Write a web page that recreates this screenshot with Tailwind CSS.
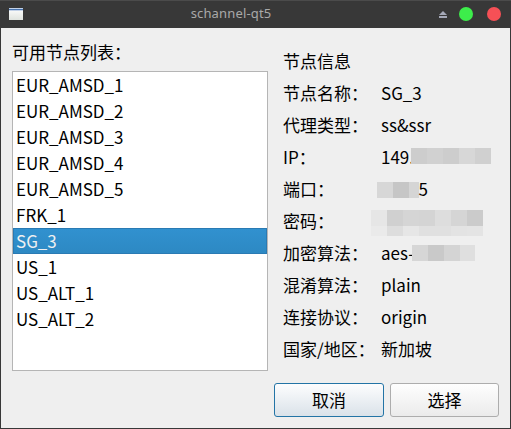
<!DOCTYPE html>
<html lang="zh-CN">
<head>
<meta charset="utf-8">
<title>schannel-qt5</title>
<script src="https://cdn.jsdelivr.net/npm/@tailwindcss/browser@4"></script>
</head>
<body class="w-[511px] h-[429px] overflow-hidden bg-[#383838]">
<div class="w-[511px] h-[429px] flex flex-col border-b border-[#383838] text-black text-[17px] leading-[26px] font-['Noto_Sans_CJK_SC',sans-serif]">
  <header class="h-7 shrink-0 flex items-center border-t border-[#4b4b4b] bg-[#383838] pl-[9px] pr-[10px] pb-px">
    <svg class="w-[14px] h-3" viewBox="0 0 14 12" shape-rendering="crispEdges">
      <defs><linearGradient id="w" x1="0" y1="0" x2="0" y2="1"><stop offset="0" stop-color="#fff"/><stop offset="1" stop-color="#dfe3de"/></linearGradient></defs>
      <rect width="14" height="12" fill="url(#w)"/><rect width="14" height="3" fill="#c3d2e8"/><rect y="1" width="14" height="1" fill="#4672ae"/>
    </svg>
    <h1 class="flex-1 -mt-[2px] text-center text-[13px] leading-5 tracking-[0.15px] text-[#a9a9a9] font-['Noto_Sans',sans-serif]">schannel-qt5</h1>
    <svg class="w-2 h-[7px] mr-3 mt-px" viewBox="0 0 8 7"><path d="M4 0L8 4H0Z M0 5H8V7H0Z" fill="#a5a9b8"/></svg>
    <span class="size-[14px] rounded-full bg-[#3ded4b] mr-[14px]"></span>
    <span class="size-[14px] rounded-full bg-[#f65056]"></span>
  </header>
  <main class="flex-1 mx-px bg-[#efefef] flex flex-col">
    <div class="flex h-[343px]">
      <section class="ml-[11px] w-[256px] shrink-0 pt-[11px]">
        <h2 class="h-8">可用节点列表：</h2>
        <ul class="h-[300px] border border-[#b5b5b5] bg-white">
          <li class="h-[26px] pl-[3px]">EUR_AMSD_1</li>
          <li class="h-[26px] pl-[3px]">EUR_AMSD_2</li>
          <li class="h-[26px] pl-[3px]">EUR_AMSD_3</li>
          <li class="h-[26px] pl-[3px]">EUR_AMSD_4</li>
          <li class="h-[26px] pl-[3px]">EUR_AMSD_5</li>
          <li class="h-[26px] pl-[3px]">FRK_1</li>
          <li class="h-[26px] pl-[2px] leading-6 border border-[#2a7ab3] bg-linear-to-b from-[#3191cf] to-[#2d89c3] text-[#eff0f1]">SG_3</li>
          <li class="h-[26px] pl-[3px]">US_1</li>
          <li class="h-[26px] pl-[3px]">US_ALT_1</li>
          <li class="h-[26px] pl-[3px]">US_ALT_2</li>
        </ul>
      </section>
      <section class="ml-[15px] shrink-0 pt-[17px] leading-8">
        <h2 class="h-8">节点信息</h2>
        <dl class="grid grid-cols-[98px_125px] auto-rows-[32px] whitespace-nowrap">
          <dt>节点名称：</dt><dd>SG_3</dd>
          <dt>代理类型：</dt><dd>ss&amp;ssr</dd>
          <dt>IP：</dt>
          <dd class="flex"><span class="w-[30px]">149.</span>
            <span class="relative mt-[7px] h-4 flex"><i class="w-4 bg-[#cdcdcd]"></i><i class="w-4 bg-[#d1d1d1]"></i><i class="w-4 bg-[#cdcdcd]"></i><i class="w-4 bg-[#d7d7d7]"></i><i class="w-4 bg-[#d0d0d0]"></i></span></dd>
          <dt>端口：</dt>
          <dd class="flex -ml-1"><span class="mt-[9px] h-4 flex"><i class="w-4 bg-[#d7d7d7]"></i><i class="w-4 bg-[#c6c6c6]"></i><i class="w-[10px] bg-[#d5d5d5]"></i></span><span class="-ml-[0.5px]">5</span></dd>
          <dt>密码：</dt>
          <dd class="-ml-[10px] pt-[5px]">
            <div class="flex h-4"><i class="w-4 bg-[#e6e6e6]"></i><i class="w-4 bg-[#d0d0d0]"></i><i class="w-4 bg-[#d5d5d5]"></i><i class="w-4 bg-[#d4d4d4]"></i><i class="w-4 bg-[#dddddd]"></i><i class="w-4 bg-[#d5d5d5]"></i><i class="w-4 bg-[#cbcbcb]"></i></div>
            <div class="flex h-[10px]"><i class="w-4 bg-[#eaeaea]"></i><i class="w-4 bg-[#dddddd]"></i><i class="w-4 bg-[#e6e6e6]"></i><i class="w-4 bg-[#e0e0e0]"></i><i class="w-4 bg-[#e0e0e0]"></i><i class="w-4 bg-[#e3e3e3]"></i><i class="w-4 bg-[#e4e4e4]"></i></div>
          </dd>
          <dt>加密算法：</dt>
          <dd class="flex"><span class="w-[31px]">aes-</span>
            <span class="relative mt-2 h-4 flex"><i class="w-4 bg-[#d6d6d6]"></i><i class="w-4 bg-[#c9c9c9]"></i><i class="w-4 bg-[#d4d4d4]"></i><i class="w-[15px] bg-[#dfdfdf]"></i></span></dd>
          <dt>混淆算法：</dt><dd>plain</dd>
          <dt>连接协议：</dt><dd>origin</dd>
          <dt>国家/地区：</dt><dd>新加坡</dd>
        </dl>
      </section>
    </div>
    <div class="mt-3 pr-[11px] flex justify-end gap-[6px]">
      <button class="w-[110px] h-[34px] rounded-[3px] border border-[#2374a6] bg-linear-to-b from-[#fdfdfe] to-[#dae2e9]">取消</button>
      <button class="w-[109px] h-[34px] rounded-[3px] border border-[#adadad] bg-linear-to-b from-[#fefefe] to-[#ebebeb]">选择</button>
    </div>
  </main>
</div>
</body>
</html>
